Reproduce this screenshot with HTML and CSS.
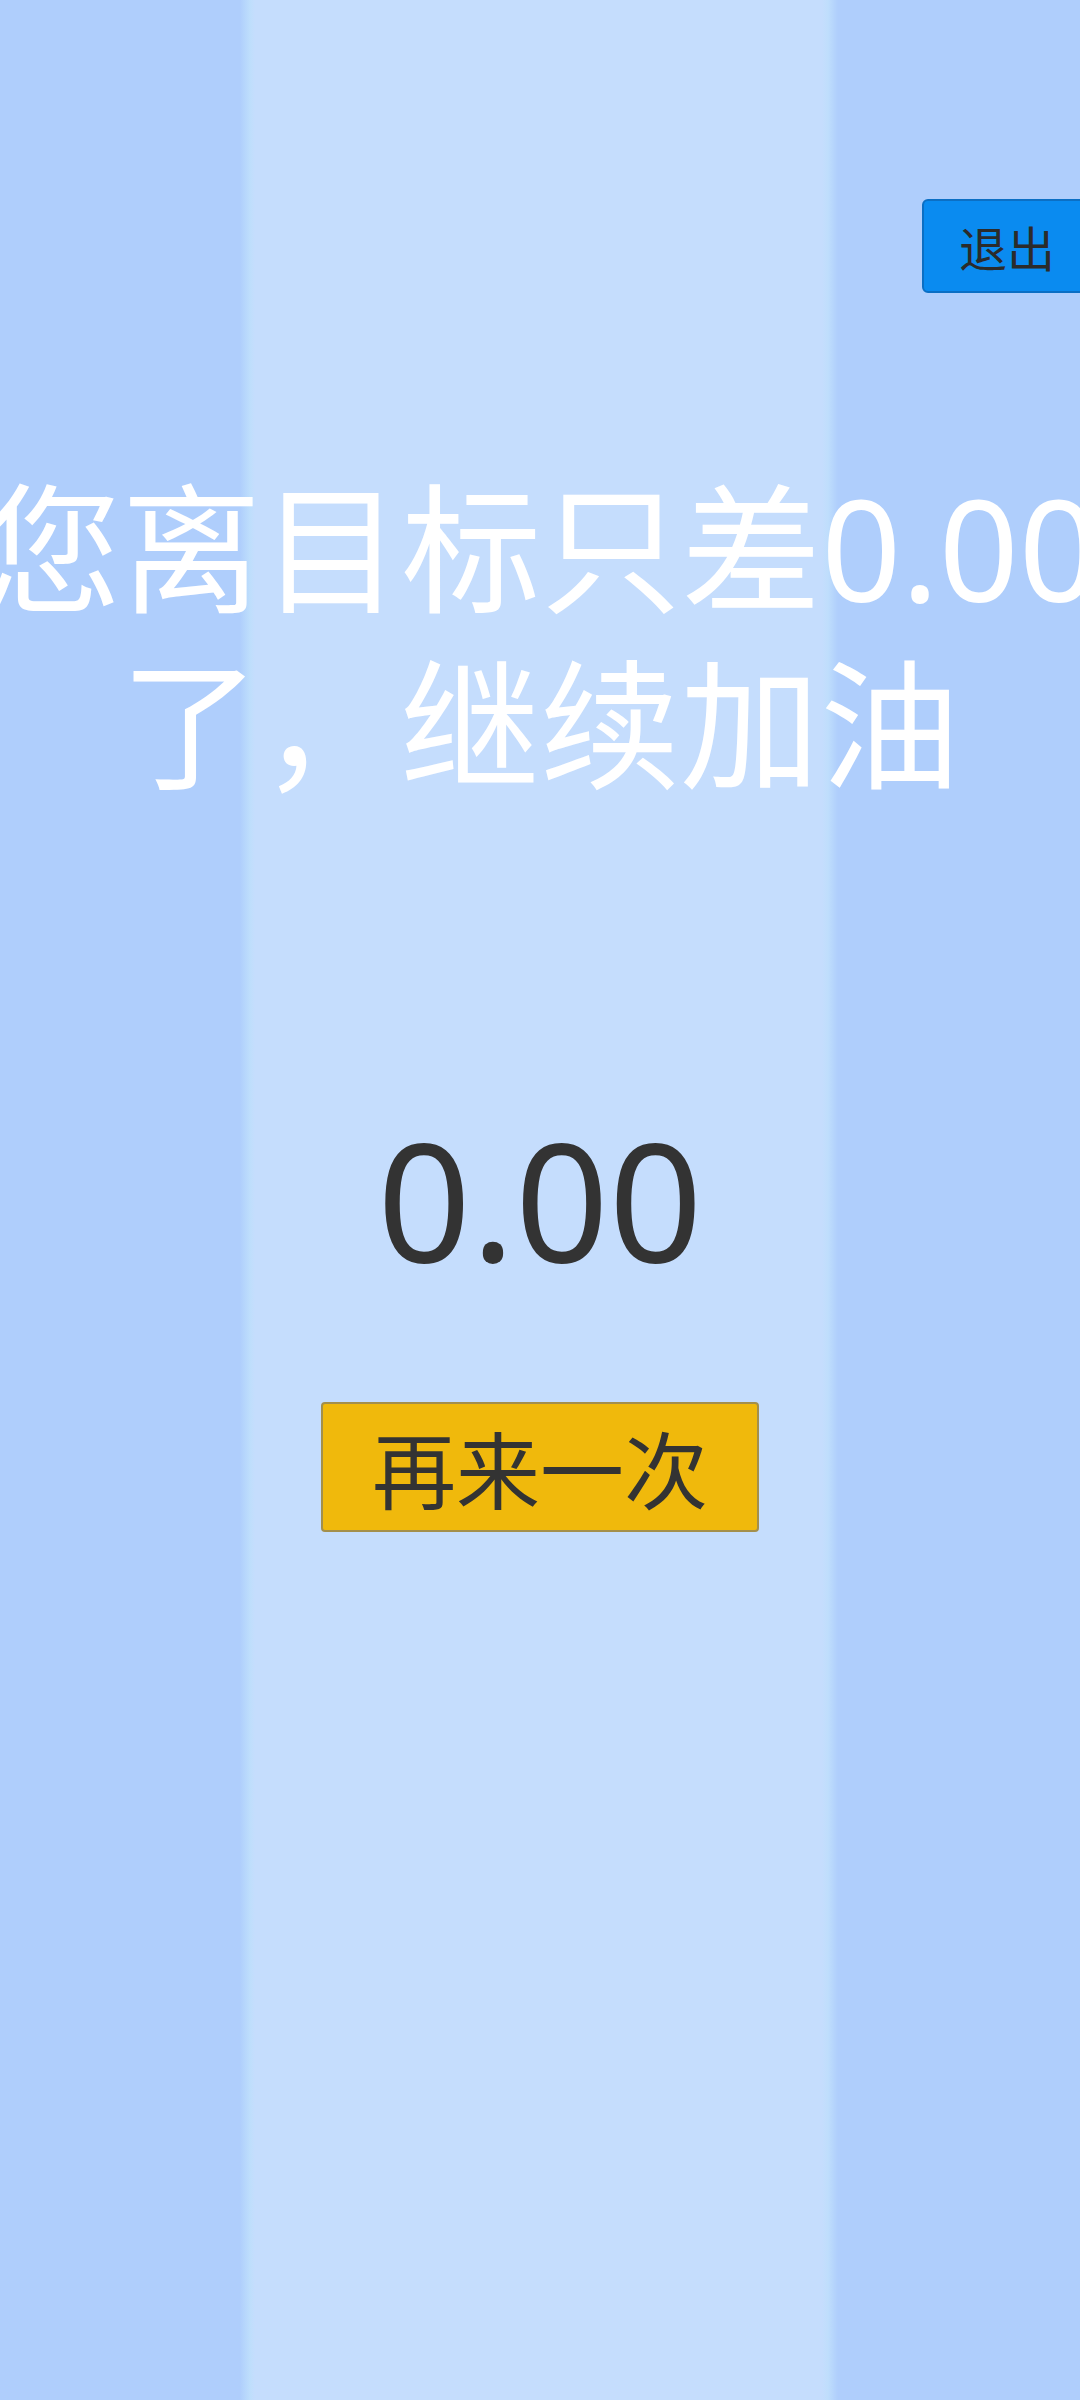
FILE: index.html
```html
<!DOCTYPE html>
<html lang="zh-CN">
<head>
    <meta charset="UTF-8">
    <meta name="viewport" content="width=1080, initial-scale=1.0">
    <title>结果</title>
    <link rel="stylesheet" href="styles.css">
</head>
<body>
    <div class="screen">
        <div class="topbar">
            <button class="exit-btn">退出</button>
        </div>
        <div class="result-msg">
            <span class="msg-line">您离目标只差0.00</span>
            <span class="msg-line">了，继续加油</span>
        </div>
        <div class="score">0.00</div>
        <button class="retry-btn">再来一次</button>
    </div>
</body>
</html>
```

FILE: styles.css
```css
html, body {
    margin: 0;
    padding: 0;
}
body {
    font-family: "Noto Sans", "Noto Sans CJK SC", sans-serif;
    overflow: hidden;
}
.screen {
    display: flex;
    flex-direction: column;
    align-items: center;
    width: 1080px;
    min-height: 2400px;
    overflow: hidden;
    background: linear-gradient(to right,
        #afcefc 0, #afcefc 240px,
        #b5d5fc 244px, #bedefc 250px, #c5ddfd 255px,
        #c5ddfd 822px, #bfdefc 828px, #b5d4fc 834px,
        #afcefc 838px, #afcefc 100%);
}
.topbar {
    align-self: stretch;
    display: flex;
    justify-content: flex-end;
    padding-top: 199px;
}
.exit-btn {
    width: 170px;
    height: 94px;
    margin-right: -12px;
    padding: 0;
    font-family: inherit;
    font-size: 48px;
    color: #2b2b2b;
    background-color: #0a8bf0;
    border: 2px solid #0b6fc4;
    border-radius: 6px;
}
.result-msg {
    display: flex;
    flex-direction: column;
    align-items: center;
    margin-top: 167px;
    color: #ffffff;
    font-size: 140px;
    line-height: 176px;
}
.msg-line {
    white-space: nowrap;
}
.score {
    margin-top: 305px;
    font-size: 164px;
    line-height: 164px;
    color: #333333;
}
.retry-btn {
    width: 438px;
    height: 130px;
    margin-top: 121px;
    padding: 0;
    font-family: inherit;
    font-size: 84px;
    color: #333333;
    background-color: #f0b90c;
    border: 2px solid #a38f4c;
    border-radius: 4px;
}
```
